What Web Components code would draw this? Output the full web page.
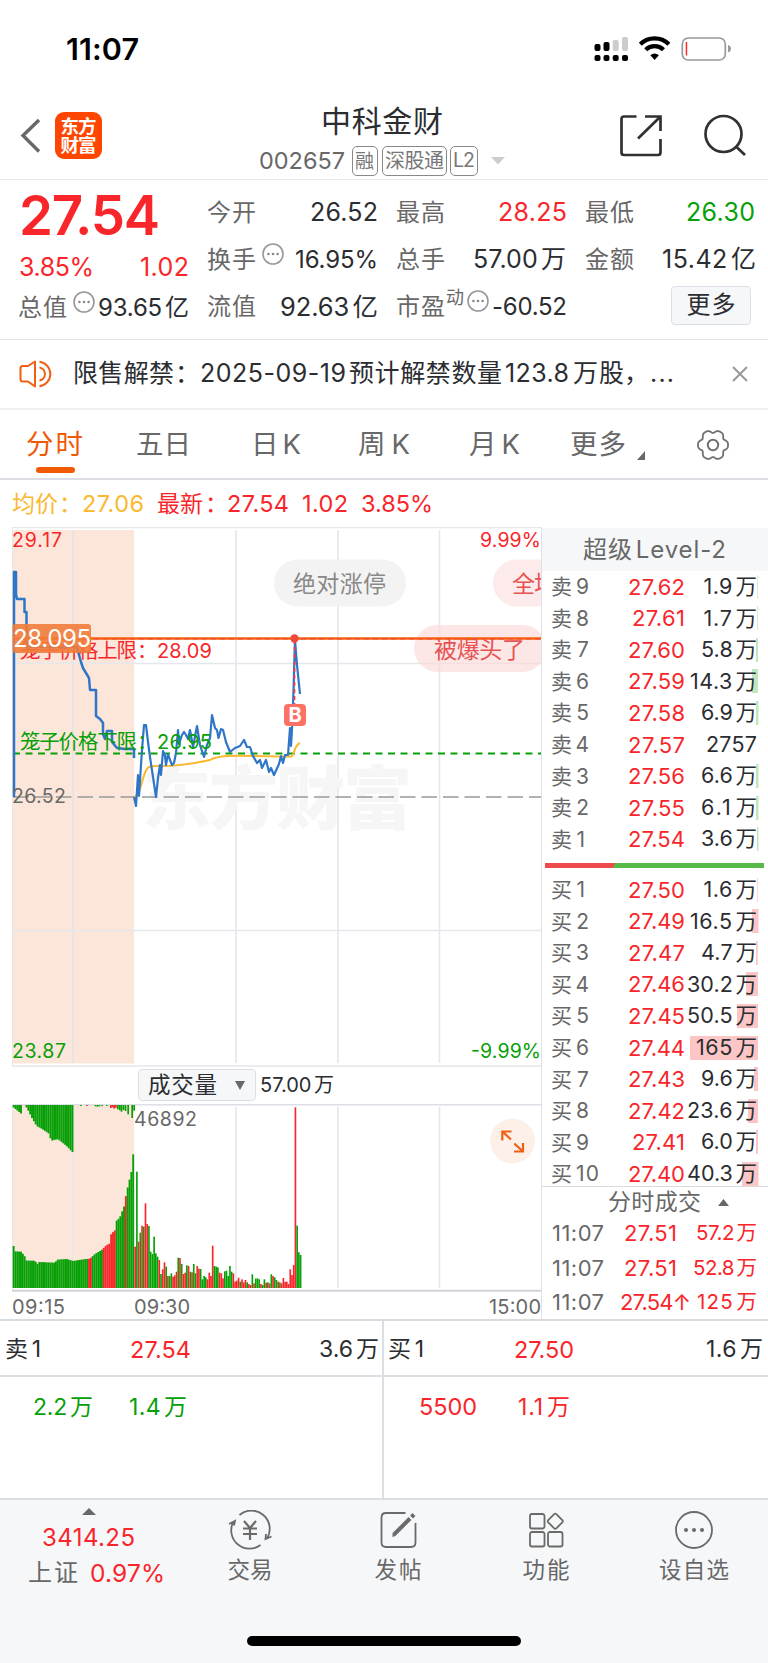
<!DOCTYPE html>
<html lang="zh-CN">
<head>
<meta charset="utf-8">
<title>中科金财 002657</title>
<style>
html,body{margin:0;padding:0;background:#fff}
body{width:768px;font-family:Inter,"Noto Sans CJK SC",sans-serif;color:#2b2d31}
</style>
</head>
<body>
<stock-page></stock-page>
<script>
const RED='#f8262a',GREEN='#07a007',GREY='#686868',DARK='#2b2d31';

/* A run of text whose letter spacing is tuned so that its ink spans exactly w pixels. */
customElements.define('fit-text',class extends HTMLElement{
  constructor(){
    super();
    this.attachShadow({mode:'open'}).innerHTML=`<style>
      :host{display:block;flex:none;white-space:nowrap;line-height:1;text-autospace:normal}
      span{display:inline-block;margin-left:-1px;line-height:inherit}
    </style><span><slot></slot></span>`;
  }
  connectedCallback(){
    const w=+this.getAttribute('w'),s=this.getAttribute('size');
    if(s)this.style.fontSize=s+'px';
    if(this.hasAttribute('color'))this.style.color=this.getAttribute('color');
    if(this.hasAttribute('weight'))this.style.fontWeight=this.getAttribute('weight');
    if(w){
      this.style.width=w+'px';
      const sp=this.shadowRoot.querySelector('span');
      const n=[...this.textContent].length;
      if(n>1)sp.style.letterSpacing=((w+2-sp.getBoundingClientRect().width)/(n-1)).toFixed(3)+'px';
    }
  }
});

/* Turns [start, width, content, colour, size, weight] cells into flex items spaced by margins. */
function cells(list,from=0){
  let at=from;
  return list.map(([x,w,t,c=DARK,s=24,wt=400])=>{
    const gap=x-at; at=x+w;
    if(t.startsWith('<'))return `<div style="flex:none;width:${w}px;margin-left:${gap}px;display:flex">${t}</div>`;
    return `<fit-text w="${w}" size="${s}" color="${c}" weight="${wt}" style="margin-left:${gap}px">${t}</fit-text>`;
  }).join('');
}
const ROW='.row{display:flex;align-items:center}svg{display:block;flex:none}';

function define(name,render){
  customElements.define(name,class extends HTMLElement{
    constructor(){super();this.attachShadow({mode:'open'});}
    connectedCallback(){this.shadowRoot.innerHTML=render(this);}
  });
}
const dots=`<svg width="22" height="22" viewBox="-11 -11 22 22" style="margin-top:-12px"><circle r="10" fill="none" stroke="#989898" stroke-width="1.6"/><g fill="#888"><circle cx="-4.6" r="1.3"/><circle r="1.3"/><circle cx="4.6" r="1.3"/></g></svg>`;

define('status-bar',()=>`<style>:host{display:block;height:96px}${ROW}.row{height:98px}svg{margin-left:456px;margin-top:-1px}</style>
<div class="row">${cells([[67,71,'11:07','#000',30.5,600]])}
<svg width="140" height="28" viewBox="595 35 140 28">
<g fill="#000"><rect x="595.500" y="44" width="6" height="7" rx="2"/><rect x="604.500" y="42" width="6" height="9" rx="2"/><rect x="595.500" y="55" width="6" height="6" rx="2"/><rect x="604.500" y="55" width="6" height="6" rx="2"/><rect x="613.700" y="55" width="6" height="6" rx="2"/><rect x="623" y="55" width="6" height="6" rx="2"/></g>
<g fill="#ccc"><rect x="613.700" y="40" width="6" height="11" rx="2"/><rect x="623" y="37" width="6" height="14" rx="2"/></g>
<g fill="none" stroke="#000" stroke-width="4.200"><path d="M641.300 44.200a20.500 20.500 0 0 1 28.600 0"/><path d="M646.700 49.800a12.800 12.800 0 0 1 17.800 0"/></g><path d="M651.300 55.200a6.800 6.800 0 0 1 8.600 0L655.600 60z"/>
<rect x="683.300" y="38" width="43" height="22" rx="6" fill="none" stroke="#999" stroke-width="1.700"/><rect x="686.700" y="42" width="1.500" height="13.500" fill="#fb2a23"/><path d="M729 45q3 1 3 3.700t-3 3.700z" fill="#999"/></svg></div>`);

define('title-bar',()=>`<style>:host{display:flex;height:83px;border-bottom:1px solid #e8e8e8}${ROW}
.logo{width:47px;height:47px;margin:16px 0 0 15px;border-radius:9px;background:#ff4600;display:flex;flex-direction:column;align-items:center;justify-content:center}
.mid{margin-left:157px;width:247px}.mid .row:first-child{height:49px}.mid .row+.row{height:32px;padding-left:1px}
.tag{box-sizing:border-box;height:30px;border:1px solid #888;border-radius:5px;display:flex;align-items:center;justify-content:center;flex:none}</style>
<svg width="20" height="36" viewBox="0 0 20 36" style="margin:22px 0 0 20px"><path d="M19 2 3 17.500 19 33.500" fill="none" stroke="#686868" stroke-width="3.400"/></svg>
<div class="logo"><fit-text w="34" size="18.500" color="#fff" weight="700">东方</fit-text><fit-text w="34" size="18.500" color="#fff" weight="700">财富</fit-text></div>
<div class="mid"><div class="row">${cells([[63,120,'中科金财',DARK,30]])}</div>
<div class="row"><fit-text w="84" size="23.500" color="${GREY}">002657</fit-text>
<div class="tag" style="width:26px;margin-left:8px"><fit-text w="18" size="19" color="#777">融</fit-text></div>
<div class="tag" style="width:65px;margin-left:4px"><fit-text w="57" size="20" color="#777">深股通</fit-text></div>
<div class="tag" style="width:28px;margin-left:3px"><fit-text w="20" size="19.500" color="#777">L2</fit-text></div>
<svg width="14" height="8" style="margin-left:13px"><path d="M0 0h14L7 7.500z" fill="#ccc"/></svg></div></div>
<svg width="130" height="46" viewBox="618 112 130 46" style="margin:16px 0 0 112px" fill="none" stroke="#303133" stroke-width="2.700"><path d="M636.500 116.500h-12.500q-2.500 0-2.500 2.500v33.500q0 2.500 2.500 2.500h34q2.500 0 2.500-2.500V139M645 116.500h15.500V131M660 117l-22 21.500"/><circle cx="723.500" cy="134" r="18"/><path d="M736 146.500 745 155"/></svg>`);

define('quote-panel',()=>`<style>:host{display:flex;height:159px;border-bottom:1px solid #e2e2e2}${ROW}
.l{width:198px;padding-top:2px}.r{width:570px;padding-top:9px}.r .row{height:47.300px}
.btn{box-sizing:border-box;width:80px;height:39px;border:1px solid #dcdfe6;border-radius:4px;background:#f6f7f9;display:flex;align-items:center;justify-content:center;margin-top:-4px}</style>
<div class="l"><div class="row" style="height:67px">${cells([[20,139,'27.54',RED,54.5,600]])}</div>
<div class="row" style="height:36px">${cells([[20,73,'3.85%',RED,25],[141,47,'1.02',RED,25]])}</div>
<div class="row" style="height:45px">${cells([[19,47,'总值',GREY,24],[73,22,dots],[99,89,'93.65亿',DARK,24]])}</div></div>
<div class="r"><div class="row">${cells([[208,47,'今开',GREY],[311,66,'26.52',DARK,25],[397,47,'最高',GREY],[499,67,'28.25',RED,25],[586,47,'最低',GREY],[687,67,'26.30',GREEN,25]],198)}</div>
<div class="row">${cells([[208,47,'换手',GREY],[262,22,dots],[296,81,'16.95%',DARK,24],[397,47,'总手',GREY],[474,91,'57.00万',DARK,25],[586,47,'金额',GREY],[663,92,'15.42亿',DARK,25]],198)}</div>
<div class="row">${cells([[208,47,'流值',GREY],[281,96,'92.63亿',DARK,25.5],[397,47,'市盈',GREY],[447,17,'<fit-text size="18" color="#686868" style="margin-top:-18px">动</fit-text>'],[467,22,dots],[493,73,'-60.52',DARK,24],[671,80,'<div class="btn"><fit-text w="47" size="24" color="#2b2d31">更多</fit-text></div>']],198)}</div></div>`);

define('notice-bar',()=>`<style>:host{display:block;height:68px;border-bottom:2px solid #f0f0f0}${ROW}.row{height:67px}</style>
<div class="row"><svg width="34" height="30" viewBox="0 0 34 30" style="margin-left:19px" fill="none" stroke="#f05f12" stroke-width="2"><path d="M16 2.500v25L9 22.500H3.500Q1.500 22.500 1.500 20V9.500Q1.500 7 3.500 7H9z" stroke-linejoin="round"/><path d="M20.500 2.700a12.400 12.400 0 0 1 0 24.600M20.500 8.500a6.600 6.600 0 0 1 0 13"/></svg>
${cells([[74,99,'限售解禁',DARK,25],[176,20,'：',DARK,25],[201,144,'2025-09-19',DARK,25],[350,151,'预计解禁数量',DARK,25],[506,62,'123.8',DARK,25],[574,49,'万股',DARK,25],[625,20,'，',DARK,25],[651,22,'...',DARK,25]],53)}
<svg width="16" height="16" style="margin-left:59px" stroke="#999" stroke-width="2"><path d="M1 1 15 15M15 1 1 15"/></svg></div>`);

const gear=(()=>{let d='';for(let i=0;i<=120;i++){const a=i/120*Math.PI*2,r=13.9+1.5*Math.cos(6*a)-.35*Math.cos(12*a);d+=(i?'L':'M')+(r*Math.cos(a)).toFixed(2)+' '+(r*Math.sin(a)).toFixed(2)}return d+'Z'})();
define('period-tabs',()=>`<style>:host{display:block;height:68px;border-bottom:2px solid #dcdee5}${ROW}.row{box-sizing:border-box;height:63px;padding-top:6px}.u{width:39px;height:6px;border-radius:3px;background:#f05a05;margin:-6px 0 0 36px}</style>
<div class="row">${cells([[27,55,'分时','#f05a05',27.5],[137,53,'五日',GREY,27.5],[252,48,'日K',GREY,27.5],[359,50,'周K',GREY,27.5],[470,49,'月K',GREY,27.5],[571,54,'更多',GREY,27.5]])}
<svg width="8" height="9" style="margin:22px 0 0 12px"><path d="M8 0v9H0z" fill="#686868"/></svg>
<svg width="34" height="34" viewBox="-17 -17 34 34" style="margin-left:51px" fill="none" stroke="#707070" stroke-width="1.800"><path d="${gear}"/><circle r="5.200" stroke-width="2"/></svg></div><div class="u"></div>`);

define('price-summary',()=>`<style>:host{display:block;height:47px}${ROW}.row{height:48px}</style>
<div class="row">${cells([[13,44,'均价','#fbb831',23],[60,18,'：','#fbb831',23],[83,60,'27.06','#fbb831',23.5],[158,44,'最新',RED,23],[206,18,'：',RED,23],[228,60,'27.54',RED,23.5],[303,44,'1.02',RED,23.5],[362,70,'3.85%',RED,23.5]])}</div>`);

const st=(x,y,w,t,c,s,extra='')=>`<text x="${x-1}" y="${y}" ${w?`textLength="${w+2}"`:''} font-size="${s}" fill="${c}" ${extra}>${t}</text>`;
const pill=(x,y,w,t,tx,tw,bg,fg)=>`<rect x="${x}" y="${y}" width="${w}" height="47" rx="23.500" fill="${bg}"/>`+st(tx,y+32.5,tw,t,fg,23);
define('price-chart',()=>{
  const pre='14,797 14,572 16,572 16,594 17,599 24.5,599 24.5,612 26.5,612 26.5,647 77,647 79,655 81,662 83,668 86,673 89,678 90,690 96,690 96,716 100,719 103,723 103,734 105,739 107,731 112,731 112,742 117,748 125,749 134,749 134,758';
  const live='134,797 136,806 138,775 139,796 141,765 142,750 144,725 146,725 148,742 150,757 153,777 156,797 158,778 160,765 161,775 163,751 165,756 166,765 168,754 170,760 172,765 174,763 176,753 178,730 179,744 182,735 184,732 186,735 188,739 190,730 193,747 197,726 200,745 204,757 207,745 210,738 212,715 215,728 217,730 218.5,738 221,729 223,730 226,742 230,752 235,748 240,746 244,740 247,747 250,747 253,756 257,763 260,760 262,768 266,760 269,772 271,768 274,775 279,764 281,756 283,763 285,755 288,755 290,728 291,746 292.5,720 293.5,690 295,640 297,665 300,694';
  const avg='M134 797C142 796 142 770 149 767S165 770 210 760C220 754 240 756 280 756.500H291C295 756 293 746 300 743';
  return `<style>:host{display:block;height:539px}svg{display:block;font-family:Inter,"Noto Sans CJK SC",sans-serif}</style>
<svg width="541" height="540" viewBox="0 527 541 540">
<rect x="12" y="530" width="122" height="533.500" fill="#fce6da"/>
<g stroke="#e4e7ec" stroke-width="2"><path d="M12 527.500H541" stroke-width="1.500"/><path d="M12 1066H541" stroke="#ececf0"/><path d="M73 530V1063" stroke="#e9e4e4"/><path d="M236 530V1063M338 530V1063M439.500 530V1063M12 663.500H541M12 930.500H541" stroke-width="1.600"/><path d="M12.500 527V1066" stroke-width="1"/></g>
${st(143,824,268,'东方财富','#f6f6f6',69,'font-weight="900"')}
<path d="M13 797H541" stroke="#999" stroke-width="1.700" stroke-dasharray="15.500 6"/>
<path d="M13 753.500H541" stroke="${GREEN}" stroke-width="1.900" stroke-dasharray="7 5.500"/>
${pill(274,559.5,132,'绝对涨停',294,91,'#f3f3f3','#888')}
${pill(493,559.5,132,'全场',513,43,'#fdeaea','#e65252')}
${pill(414,625,132,'被爆头了',435,89,'#fad9d9aa','#e65252')}
${st(21,657.5,115,'笼子价格上限',RED,20.5)}${st(138,657.5,0,'：',RED,20.5)}${st(158,657.5,53,'28.09',RED,20)}
<path d="${avg}" fill="none" stroke="#fbb831" stroke-width="2"/>
<g fill="none" stroke="#2f76c7" stroke-linejoin="round"><polyline points="${pre}" stroke-width="2.500"/><polyline points="${live}" stroke-width="2.200"/></g>
${st(21,749,115,'笼子价格下限',GREEN,20.5)}${st(138,749,0,'：',GREEN,20.5)}${st(158,749,53,'26.95',GREEN,20)}
<path d="M13 638.500H541" stroke="#f56206" stroke-width="2.600"/><path d="M13 638.800H541" stroke="#f84d3a" stroke-width="1.500" stroke-dasharray="5 4"/>
<rect x="12.500" y="624" width="78.500" height="29" rx="3" fill="#f17c3b" fill-opacity=".9"/>${st(14,647,76,'28.095','#fff',24)}
<path d="M294.500 640V704" stroke="#f83a3a" stroke-width="1.700" stroke-dasharray="4 3"/><circle cx="294.500" cy="638.500" r="4.200" fill="#ed4a3d"/>
<rect x="284" y="704" width="22" height="22" rx="4" fill="#fc7164"/><text x="295" y="722" font-size="20" font-weight="700" fill="#fff" text-anchor="middle">B</text>
${st(13,547,48,'29.17',RED,19.5)}${st(481,547,59,'9.99%',RED,19.5)}${st(13,1058,52,'23.87',GREEN,19.5)}${st(472,1058,68,'-9.99%',GREEN,19.5)}${st(13,802.5,52,'26.52',GREY,19.5)}
</svg>`});

define('indicator-bar',()=>`<style>:host{display:block;height:38px}${ROW}.row{height:38px}.sel{box-sizing:border-box;width:118px;height:32px;margin-left:138px;border:1px solid #dcdfe6;border-radius:4px;background:#f6f7f9;display:flex;align-items:center}</style>
<div class="row"><div class="sel">${cells([[11,67,'成交量',DARK,22.5]],1)}<svg width="10" height="9" style="margin-left:19px"><path d="M0 0h10L5 9z" fill="#686868"/></svg></div>${cells([[261,72,'57.00万',DARK,20]],256)}</div>`);

define('volume-chart',()=>{
  const lerp=(p,x)=>{for(let i=1;i<p.length;i++)if(x<=p[i][0]){const[a,b]=[p[i-1],p[i]];return a[1]+(b[1]-a[1])*(x-a[0])/(b[0]-a[0]||1)}return p.at(-1)[1]};
  const low=[[38,646],[44,650],[46,664],[64,665],[75,680],[80,692],[105,692],[112,702],[118,696],[165,698],[172,689],[200,687],[220,693],[250,688],[270,686],[285,672],[305,660],[320,645],[331,640],[334,608],[344,605],[349,573],[360,562],[370,535],[376,520],[378,495],[385,465],[392,435],[397,415],[400,370],[403,370]];
  const top=[[38,230],[65,252],[66,226],[77,228],[84,240],[95,262],[110,288],[125,296],[150,313],[153,338],[158,330],[175,328],[200,348],[217,366],[220,366]];
  let s='';
  for(let i=0;i<66;i++){const x=38+i*5.52,y=lerp(low,x+3),red=(x>262&&x<274)||(x>303&&x<344)||(x>373&&x<380);
    s+=`<rect x="${x/3}" y="${1030+y/3}" width="1.900" height="${(774-y)/3}" fill="${red?RED:GREEN}"/>`;
    if(x<217&&!(x>64&&x<76)){const t=lerp(top,x+3);s+=`<rect x="${x/3}" y="1105" width="1.900" height="${(t-225)/3}" fill="${GREEN}"/>`}}
  [[240,228,1],[258,228,0],[284,229,1],[290,230,1],[296,229,1],[304,228,1],[318,228,1],[330,234,0],[335,232,0],[340,236,0],[345,233,0],[351,238,1],[357,241,1],[362,245,1],[368,240,1],[374,243,1],[382,253,1],[394,264,1],[400,242,1]].forEach(([x,t,g])=>s+=`<rect x="${x/3}" y="1105" width="1.700" height="${(t-225)/3}" fill="${g?GREEN:RED}"/>`);
  '650r 425g 635r 608g 587r 590g 520r 582r 588g 665g 672g 620g 670g 680g 690r 732g 718r 697r 710g 738r 738g 730g 740r 736r 725r 683g 684r 702g 732r 728r 706g 708r 725g 727r 702g 730g 708r 716r 717g 748g 738g 742g 748r 728r 738r 647r 708g 710g 712g 728r 730r 745r 724g 722g 738g 708g 725g 730r 755r 752r 743r 755g 748r 757r 750r 757g 762r 765r 733g 760r 746g 745g 748g 762r 765g 748g 758r 757g 760r 733g 738r 742g 750g 755r 757g 760r 744r 755r 755r 762r 718r 735r 705r 232r 587g 667g 675g'.split(' ').forEach((v,i)=>{const y=parseInt(v);s+=`<rect x="${((403+i*5.17)/3).toFixed(2)}" y="${1030+y/3}" width="1.650" height="${(774-y)/3}" fill="${v.endsWith('r')?RED:GREEN}"/>`});
  return `<style>:host{display:block;height:216px}svg{display:block;font-family:Inter,"Noto Sans CJK SC",sans-serif}</style>
<svg width="541" height="216" viewBox="0 1104 541 216">
<rect x="12" y="1105" width="122" height="183" fill="#fce6da"/>
<g stroke="#e4e7ec" stroke-width="1.600"><path d="M12 1104.800H541" stroke="#dce0e6"/><path d="M73 1107V1288M236 1107V1288M338 1107V1288M439.500 1107V1288"/><path d="M12.500 1104V1290" stroke-width="1"/><path d="M12 1290.800H541" stroke="#cfd2d8" stroke-width="2"/></g>
<g>${s}</g>
${st(135,1126,61,'46892',GREY,19.5)}${st(13,1313.5,51,'09:15',GREY,20)}${st(135,1313.5,54,'09:30',GREY,20)}${st(490,1313.5,50,'15:00',GREY,20)}
<circle cx="512.500" cy="1141" r="22.500" fill="#fdf0e9"/><path d="M502.300 1140.500V1131.500H511.500M502.300 1131.500 511 1139.500M523 1143V1151.500H514M523 1151.500 514.300 1143.500" fill="none" stroke="#f05f12" stroke-width="2.200"/>
</svg>`});

define('book-level',el=>{
  const [n,p,q,w]=el.getAttribute('data').split('|'),sell=n[0]==='卖';
  const qw={'2757':49,'165万':59}[q]||({'1':51.5}[q[0]]||54)-(q.length===5?0:0);
  const width=q.length===5?(q[0]==='1'?65:68):qw;
  const lw=n.length===3?46:n.endsWith('1')?32:36;
  return `<style>:host{display:block;height:31.550px}${ROW}.row{height:31.550px;background:linear-gradient(${sell?'#bfe8bf,#bfe8bf':'#fcc5c6,#fcc5c6'}) right 10px center/${w}px 24px no-repeat}</style>
<div class="row">${cells([[10,lw,n,GREY,21],[142-(p.endsWith('1')?51:55),p.endsWith('1')?51:55,p,RED,22],[214-width,width,q,DARK,21.5]])}</div>`});

define('order-book',()=>{
  const sell=['卖9|27.62|1.9万|.7','卖8|27.61|1.7万|.7','卖7|27.60|5.8万|2','卖6|27.59|14.3万|6','卖5|27.58|6.9万|2.5','卖4|27.57|2757|0','卖3|27.56|6.6万|2.5','卖2|27.55|6.1万|2.5','卖1|27.54|3.6万|1.5'];
  const buy=['买1|27.50|1.6万|.7','买2|27.49|16.5万|6.5','买3|27.47|4.7万|1.7','买4|27.46|30.2万|12','买5|27.45|50.5万|21','买6|27.44|165万|68','买7|27.43|9.6万|4','买8|27.42|23.6万|10','买9|27.41|6.0万|2.3','买10|27.40|40.3万|16.5'];
  const L=a=>a.map(v=>`<book-level data="${v}"></book-level>`).join('');
  const T=(p,x,w,q,qx)=>`<div class="row t">${cells([[11,50,'11:07',GREY,22],[x,w,p,RED,22],[qx,214-qx,q,RED,20.5]])}</div>`;
  return `<style>:host{display:block;width:226px;border-left:1px solid #dfe1e7}${ROW}
.h{height:43px;margin-top:1px;background:#f6f7f9}.buy{height:311.500px;overflow:hidden;border-bottom:1px solid #d9dbe1}
.bar{height:5px;margin:8.500px 4px 5.600px 3px;background:linear-gradient(115deg,#ef4a4c 31.500%,#57b947 31.900%)}.th{height:31px;margin-bottom:-1.500px}.t{height:34.500px}</style>
<div class="row h">${cells([[42,141,'超级Level-2',GREY,24]])}</div><div>${L(sell)}</div><div class="bar"></div><div class="buy">${L(buy)}</div>
<div class="row th">${cells([[67,91,'分时成交',GREY,23]])}<svg width="11" height="7" style="margin-left:18px"><path d="M0 7h11L5.500 0z" fill="#686868"/></svg></div>
${T('27.51',83,51,'57.2万',155)}${T('27.51',83,51,'52.8万',152)}${T('27.54↑',79,69,'125万',156)}`});

define('depth-side',el=>{
  const a=el.getAttribute('side')==='sell';
  return `<style>:host{display:block;width:384px;height:177px;box-sizing:border-box;${a?'border-right:2px solid #dcdee5':''}}${ROW}.a{box-sizing:border-box;height:56px;padding-top:3px;border-bottom:2px solid #dcdee5}.b{height:60px}</style>
<div class="row a">${a?cells([[6,34,'卖1',DARK,23],[131,59,'27.54',RED,23.5],[320,58,'3.6万',DARK,23]]):cells([[5,34,'买1',DARK,23],[131,58,'27.50',RED,23.5],[323,55,'1.6万',DARK,23]])}</div>
<div class="row b">${a?cells([[34,58,'2.2万',GREEN,23],[130,56,'1.4万',GREEN,23]]):cells([[36,56,'5500',RED,23.5],[135,50,'1.1万',RED,23]])}</div>`});

define('nav-item',el=>`<style>:host{display:flex;flex-direction:column;align-items:center;width:148px;flex:none;padding-top:10px}svg{display:block}div{margin-top:9px}</style>
<slot></slot><div><fit-text w="${el.getAttribute('w')}" size="22.500" color="${GREY}">${el.getAttribute('label')}</fit-text></div>`);

define('bottom-nav',()=>`<style>:host{display:block;height:164px;border-top:2px solid #dcdee5;background:#f6f7f9}${ROW}
.n{display:flex;height:136px}.idx{width:177px}.home{width:274px;height:10px;border-radius:5px;background:#000;margin:0 auto}nav-item svg{stroke:#6a6a6a;fill:none;stroke-width:1.800}</style>
<div class="n"><div class="idx"><svg width="14" height="7" style="margin:8px 0 0 82px"><path d="M0 7h14L7 0z" fill="#686868"/></svg>
<div class="row" style="height:46px">${cells([[43,91,'3414.25',RED,24]])}</div><div class="row" style="height:24px">${cells([[29,48,'上证',GREY,24],[91,73,'0.97%',RED,24.5]])}</div></div>
<nav-item label="交易" w="43"><svg width="44" height="40" viewBox="-22 -20 44 40"><path d="M-10.500-15.500A18.300 18.300 0 0 1 17 8M10.500 14.500A18.300 18.300 0 0 1-17-8M21.500 6l-6 2.500 .500-5M-21-6.500l6-3-1 4.500" transform="translate(0 .5)"/><path d="M-6-9 0-2 6-9M0-2V10M-7-1.500H7M-7 4H7" stroke-width="2.200"/></svg></nav-item>
<nav-item label="发帖" w="45"><svg width="40" height="40" viewBox="-20.500 -20 40 40"><path d="M7-17H-12.500Q-17-17-17-12.500V12.500Q-17 17-12.500 17H12.500Q17 17 17 12.500V-7"/><path d="M-4.500 4.500 11.500-11.500" stroke-width="4"/><path d="M-6 7-6 3-3 6z" fill="#686868" stroke="none"/><path d="M13-13 15.500-15.500" stroke-width="4"/></svg></nav-item>
<nav-item label="功能" w="45"><svg width="40" height="40" viewBox="-20.500 -20 40 40"><rect x="-16.500" y="-16" width="14.500" height="14.500" rx="2"/><rect x="-16.500" y="2" width="14.500" height="14.500" rx="2"/><rect x="1.500" y="2" width="14.500" height="14.500" rx="2"/><rect x="3" y="-14.500" width="11.500" height="11.500" rx="1.500" transform="rotate(45 8.750 -8.750)"/></svg></nav-item>
<nav-item label="设自选" w="68"><svg width="40" height="40" viewBox="-20 -20 40 40"><circle r="18"/><g fill="#686868" stroke="none"><circle cx="-8" r="2"/><circle r="2"/><circle cx="8" r="2"/></g></svg></nav-item></div>
<div class="home"></div>`);

define('stock-page',()=>`<style>:host{display:block;width:768px;height:1663px;overflow:hidden;background:#fff}
.main{display:flex;height:792px;border-bottom:2px solid #d7dade}.charts{width:541px}.depth{display:flex}</style>
<status-bar></status-bar><title-bar></title-bar><quote-panel></quote-panel><notice-bar></notice-bar><period-tabs></period-tabs><price-summary></price-summary>
<div class="main"><div class="charts"><price-chart></price-chart><indicator-bar></indicator-bar><volume-chart></volume-chart></div><order-book></order-book></div>
<div class="depth"><depth-side side="sell"></depth-side><depth-side side="buy"></depth-side></div><bottom-nav></bottom-nav>`);
</script>
</body>
</html>
